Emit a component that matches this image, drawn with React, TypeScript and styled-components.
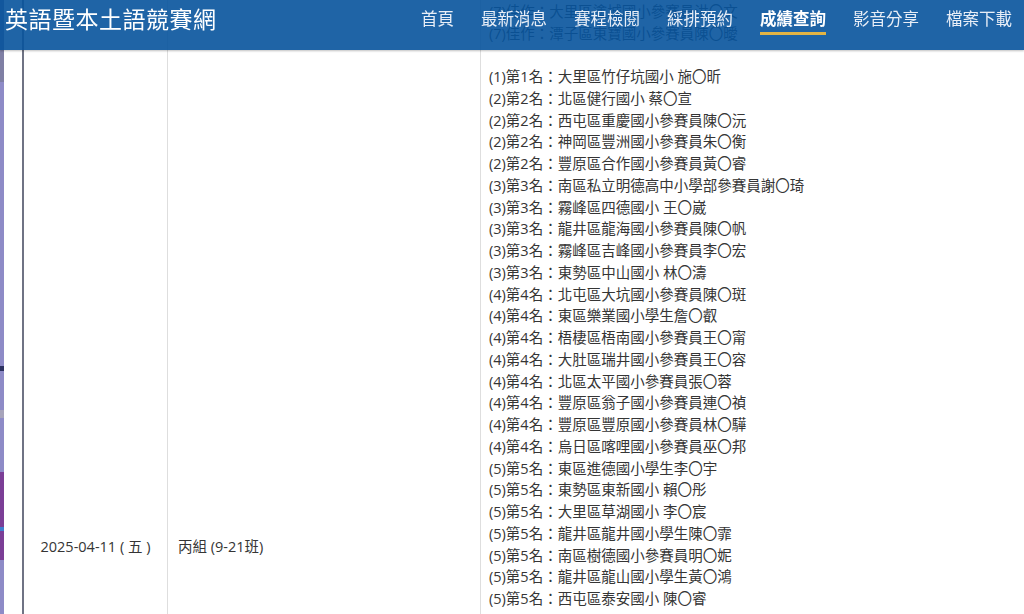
import styled, { createGlobalStyle } from "styled-components";

const GlobalStyle = createGlobalStyle`
  html, body {
    margin: 0;
  }
  body {
    overflow: hidden;
    font-family: "Open Sans", "Noto Sans CJK TC", sans-serif;
    color: #353535;
    background:
      linear-gradient(
        to bottom,
        #7f7fa4 0 82px,
        transparent 82px 366px,
        #2c3160 366px 371px,
        transparent 371px 410px,
        #a7a4ba 410px 418px,
        transparent 418px 472px,
        #7b3e96 472px 527px,
        #3f7fd0 527px 531px,
        #7b3e96 531px 560px,
        transparent 560px
      ),
      #8e8bc7;
  }
`;

const Header = styled.header`
  position: fixed;
  top: 0;
  left: 0;
  right: 0;
  height: 50px;
  z-index: 10;
  display: flex;
  justify-content: space-between;
  align-items: flex-start;
  padding: 0 12px 0 5px;
  box-sizing: border-box;
  background: rgba(7, 83, 156, 0.9);
  box-shadow: 0 1px 2px rgba(0, 0, 0, 0.25);
  font-family: "Noto Sans CJK TC", sans-serif;
`;

const Title = styled.h1`
  margin: 0;
  font-size: 23px;
  font-weight: 400;
  line-height: 36px;
  color: #fff;
  letter-spacing: 0.5px;
`;

const Nav = styled.nav`
  display: flex;
  gap: 27px;
`;

const NavLink = styled.a<{ $active?: boolean }>`
  display: block;
  padding: 7px 0 3px;
  font-size: 16.5px;
  line-height: 22px;
  font-weight: ${({ $active }) => ($active ? 700 : 400)};
  color: ${({ $active }) => ($active ? "#fff" : "#e8eef7")};
  border-bottom: 3px solid ${({ $active }) => ($active ? "#e2b445" : "transparent")};
  text-decoration: none;
  cursor: pointer;
`;

const Page = styled.main`
  margin-left: 4px;
  padding-left: 18px;
  min-height: 100vh;
  background: #fff;
`;

const Table = styled.table`
  width: 100%;
  table-layout: fixed;
  border-collapse: separate;
  border-spacing: 0;
  border-left: 2px solid #6f7384;
  font-size: 14.5px;
  line-height: 1.5;
`;

const Row = styled.tr<{ $height?: number }>`
  height: ${({ $height }) => ($height ? `${$height}px` : "auto")};

  & + & > td {
    border-top: 1px solid #e2ded4;
  }
`;

const Cell = styled.td`
  box-sizing: border-box;
  vertical-align: middle;

  & + & {
    border-left: 1px solid #dedede;
  }
`;

const DateCell = styled(Cell)`
  width: 143px;
  text-align: center;
`;

const GroupCell = styled(Cell)`
  width: 313px;
  padding-left: 10px;
`;

const ResultCell = styled(Cell)<{ $peek?: boolean }>`
  padding: ${({ $peek }) => ($peek ? "1px 8px 11.5px" : "10px 8px 12px")};
  vertical-align: top;
`;

const ResultLine = styled.div`
  white-space: nowrap;
`;

const navItems = ["首頁", "最新消息", "賽程檢閱", "綵排預約", "成績查詢", "影音分享", "檔案下載"];

const previousTail = [
  "(7)佳作：大里區塗城國小參賽員洪〇文",
  "(7)佳作：潭子區東寶國小參賽員陳〇曖",
];

const results = [
  "(1)第1名：大里區竹仔坑國小 施〇昕",
  "(2)第2名：北區健行國小 蔡〇宣",
  "(2)第2名：西屯區重慶國小參賽員陳〇沅",
  "(2)第2名：神岡區豐洲國小參賽員朱〇衡",
  "(2)第2名：豐原區合作國小參賽員黃〇睿",
  "(3)第3名：南區私立明德高中小學部參賽員謝〇琦",
  "(3)第3名：霧峰區四德國小 王〇崴",
  "(3)第3名：龍井區龍海國小參賽員陳〇帆",
  "(3)第3名：霧峰區吉峰國小參賽員李〇宏",
  "(3)第3名：東勢區中山國小 林〇濤",
  "(4)第4名：北屯區大坑國小參賽員陳〇斑",
  "(4)第4名：東區樂業國小學生詹〇叡",
  "(4)第4名：梧棲區梧南國小參賽員王〇甯",
  "(4)第4名：大肚區瑞井國小參賽員王〇容",
  "(4)第4名：北區太平國小參賽員張〇蓉",
  "(4)第4名：豐原區翁子國小參賽員連〇禎",
  "(4)第4名：豐原區豐原國小參賽員林〇驊",
  "(4)第4名：烏日區喀哩國小參賽員巫〇邦",
  "(5)第5名：東區進德國小學生李〇宇",
  "(5)第5名：東勢區東新國小 賴〇彤",
  "(5)第5名：大里區草湖國小 李〇宸",
  "(5)第5名：龍井區龍井國小學生陳〇霏",
  "(5)第5名：南區樹德國小參賽員明〇妮",
  "(5)第5名：龍井區龍山國小學生黃〇鴻",
  "(5)第5名：西屯區泰安國小 陳〇睿",
];

const App = () => {
  return (
    <>
      <GlobalStyle />
      <Header>
        <Title>英語暨本土語競賽網</Title>
        <Nav>
          {navItems.map((item) => (
            <NavLink key={item} $active={item === "成績查詢"}>
              {item}
            </NavLink>
          ))}
        </Nav>
      </Header>
      <Page>
        <Table>
          <tbody>
            <Row>
              <DateCell />
              <GroupCell />
              <ResultCell $peek>
                {previousTail.map((line) => (
                  <ResultLine key={line}>{line}</ResultLine>
                ))}
              </ResultCell>
            </Row>
            <Row $height={981}>
              <DateCell>2025-04-11 ( 五 )</DateCell>
              <GroupCell>丙組 (9-21班)</GroupCell>
              <ResultCell>
                {results.map((line) => (
                  <ResultLine key={line}>{line}</ResultLine>
                ))}
              </ResultCell>
            </Row>
          </tbody>
        </Table>
      </Page>
    </>
  );
};

export default App;
